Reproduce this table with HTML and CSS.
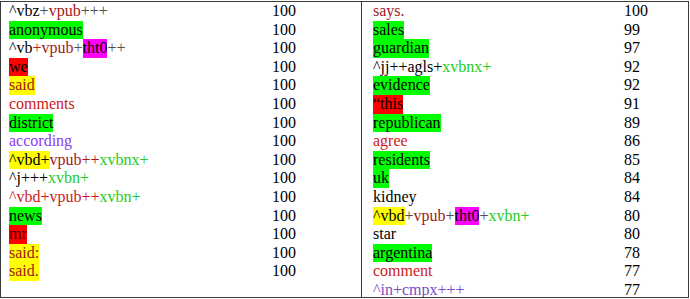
FILE: index.html
```html
<!DOCTYPE html>
<html>
<head>
<meta charset="utf-8">
<link rel="stylesheet" href="styles.css">
</head>
<body>
<div class="table">
  <div class="half left">
    <div class="w"><span>^vbz</span><span class="g">+</span><span class="dr">vpub</span><span class="g">+++</span></div><div class="n">100</div>
    <div class="w"><span class="bg-g">anonymous</span></div><div class="n">100</div>
    <div class="w"><span>^vb</span><span class="r">+</span><span class="dr">vpub</span><span class="g">+</span><span class="bg-m">tht0</span><span class="g">++</span></div><div class="n">100</div>
    <div class="w"><span class="bg-r">we</span></div><div class="n">100</div>
    <div class="w"><span class="bg-y dr">said</span></div><div class="n">100</div>
    <div class="w"><span class="r">comments</span></div><div class="n">100</div>
    <div class="w"><span class="bg-g">district</span></div><div class="n">100</div>
    <div class="w"><span class="p">according</span></div><div class="n">100</div>
    <div class="w"><span class="bg-y">^vbd+</span><span class="dr">vpub++</span><span class="gr">xvbnx+</span></div><div class="n">100</div>
    <div class="w"><span>^j+++</span><span class="gr">xvbn+</span></div><div class="n">100</div>
    <div class="w"><span class="r">^vbd+vpub++</span><span class="gr">xvbn+</span></div><div class="n">100</div>
    <div class="w"><span class="bg-g">news</span></div><div class="n">100</div>
    <div class="w"><span class="bg-r dr2">mr</span></div><div class="n">100</div>
    <div class="w"><span class="bg-y dr">said:</span></div><div class="n">100</div>
    <div class="w"><span class="bg-y dr">said.</span></div><div class="n">100</div>
  </div>
  <div class="half right">
    <div class="w"><span class="dr">says.</span></div><div class="n">100</div>
    <div class="w"><span class="bg-g">sales</span></div><div class="n">99</div>
    <div class="w"><span class="bg-g">guardian</span></div><div class="n">97</div>
    <div class="w"><span>^jj++agls+</span><span class="gr">xvbnx+</span></div><div class="n">92</div>
    <div class="w"><span class="bg-g">evidence</span></div><div class="n">92</div>
    <div class="w"><span class="bg-r">“this</span></div><div class="n">91</div>
    <div class="w"><span class="bg-g">republican</span></div><div class="n">89</div>
    <div class="w"><span class="r">agree</span></div><div class="n">86</div>
    <div class="w"><span class="bg-g">residents</span></div><div class="n">85</div>
    <div class="w"><span class="bg-g">uk</span></div><div class="n">84</div>
    <div class="w"><span>kidney</span></div><div class="n">84</div>
    <div class="w"><span class="bg-y">^vbd</span><span class="g">+</span><span class="dr">vpub</span><span class="g">+</span><span class="bg-m">tht0</span><span class="g">+</span><span class="gr">xvbn+</span></div><div class="n">80</div>
    <div class="w"><span>star</span></div><div class="n">80</div>
    <div class="w"><span class="bg-g">argentina</span></div><div class="n">78</div>
    <div class="w"><span class="r">comment</span></div><div class="n">77</div>
    <div class="w"><span class="p2">^in+cmpx+++</span></div><div class="n">77</div>
  </div>
</div>
</body>
</html>
```
FILE: styles.css
```css
html, body {
  margin: 0;
  padding: 0;
  background: #ffffff;
}
body {
  font-family: "Liberation Serif", "Times New Roman", Times, serif;
  font-size: 16px;
  color: #000000;
}
.table {
  margin-top: 1px;
  width: 689px;
  height: 297px;
  box-sizing: border-box;
  border: 1px solid #3c3c3c;
  display: flex;
  overflow: hidden;
}
.half {
  display: grid;
  grid-auto-rows: 18.6px;
  align-content: start;
  line-height: 18.6px;
}
.left {
  width: 361px;
  box-sizing: border-box;
  border-right: 1px solid #3c3c3c;
  padding-left: 8px;
  grid-template-columns: 263px 1fr;
}
.right {
  flex: 1;
  padding-left: 11px;
  grid-template-columns: 251px 1fr;
}
.w, .n {
  white-space: nowrap;
}
.w span {
  display: inline-block;
  height: 18.6px;
}
.g { color: #505050; }
.dr { color: #a01818; }
.dr2 { color: #4a0000; }
.r { color: #cc1a1a; }
.p { color: #8a3cf0; }
.p2 { color: #7a4cc8; }
.gr { color: #22cc22; }
.bg-g { background: #00ff00; }
.bg-r { background: #ff0000; }
.bg-y { background: #ffff00; }
.bg-m { background: #ff00ff; }
```
